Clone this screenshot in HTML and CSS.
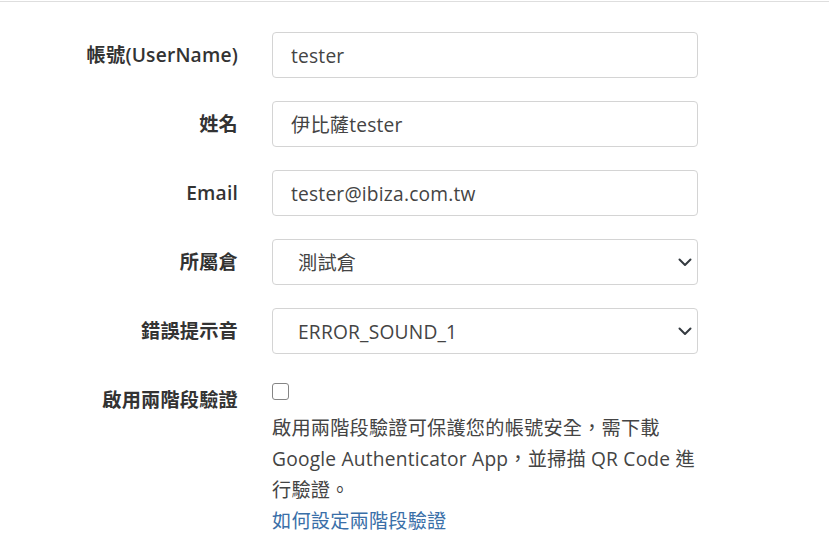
FILE: index.html
```html
<!DOCTYPE html>
<html>
<head>
    <title>個人資料</title>
    <link rel="stylesheet" href="styles.css">
</head>
<body>
<div class="topline"></div>
<form class="form">
    <div class="row">
        <label class="label" for="userName">帳號(UserName)</label>
        <input class="field" type="text" id="userName" value="tester">
    </div>
    <div class="row">
        <label class="label" for="name">姓名</label>
        <input class="field" type="text" id="name" value="伊比薩tester">
    </div>
    <div class="row">
        <label class="label" for="email">Email</label>
        <input class="field" type="text" id="email" value="tester@ibiza.com.tw">
    </div>
    <div class="row">
        <label class="label" for="warehouse">所屬倉</label>
        <div class="select-wrap">
            <select class="field select" id="warehouse">
                <option>測試倉</option>
            </select>
            <svg class="chevron" width="14" height="9" viewBox="0 0 14 9"><path d="M1.5 1.5 L7 7 L12.5 1.5" fill="none" stroke="#343a40" stroke-width="2" stroke-linecap="round" stroke-linejoin="round"/></svg>
        </div>
    </div>
    <div class="row">
        <label class="label" for="sound">錯誤提示音</label>
        <div class="select-wrap">
            <select class="field select" id="sound">
                <option>ERROR_SOUND_1</option>
            </select>
            <svg class="chevron" width="14" height="9" viewBox="0 0 14 9"><path d="M1.5 1.5 L7 7 L12.5 1.5" fill="none" stroke="#343a40" stroke-width="2" stroke-linecap="round" stroke-linejoin="round"/></svg>
        </div>
    </div>
    <div class="row">
        <label class="label" for="twoFactor">啟用兩階段驗證</label>
        <div>
            <input class="check" type="checkbox" id="twoFactor">
            <p class="help">啟用兩階段驗證可保護您的帳號安全，需下載 Google Authenticator App，並掃描 QR Code 進行驗證。</p>
            <a class="link" href="#">如何設定兩階段驗證</a>
        </div>
    </div>
</form>
</body>
</html>
```

FILE: styles.css
```css
* {
    margin: 0;
    padding: 0;
    box-sizing: border-box;
}
body {
    font-family: "Open Sans", "Noto Sans CJK TC", sans-serif;
    font-size: 19.2px;
    letter-spacing: 0.2px;
    color: #333;
    background-color: #fff;
}
.topline {
    margin-top: 1px;
    border-top: 1px solid #dedede;
}
.form {
    padding-top: 30px;
}
.row {
    display: grid;
    grid-template-columns: 238px 426px;
    column-gap: 34px;
    margin-bottom: 23px;
}
.label {
    text-align: right;
    font-weight: 600;
    line-height: 46px;
}
.field {
    display: block;
    width: 100%;
    height: 46px;
    border: 1px solid #d4d4d4;
    border-radius: 4px;
    padding: 0 18px;
    font-family: inherit;
    font-size: 19.2px;
    letter-spacing: 0.2px;
    color: #444;
    background-color: #fff;
}
.select-wrap {
    position: relative;
}
.select {
    appearance: none;
    -webkit-appearance: none;
    padding-left: 25px;
}
.chevron {
    position: absolute;
    top: 19px;
    right: 6px;
}
.check {
    appearance: none;
    -webkit-appearance: none;
    display: block;
    width: 17px;
    height: 17px;
    margin-top: 6px;
    border: 1.5px solid #858585;
    border-radius: 3px;
    background-color: #fff;
}
.help {
    margin-top: 12px;
    line-height: 31px;
    color: #444;
}
.link {
    display: block;
    line-height: 31px;
    color: #3a6fa8;
    text-decoration: none;
}
```
